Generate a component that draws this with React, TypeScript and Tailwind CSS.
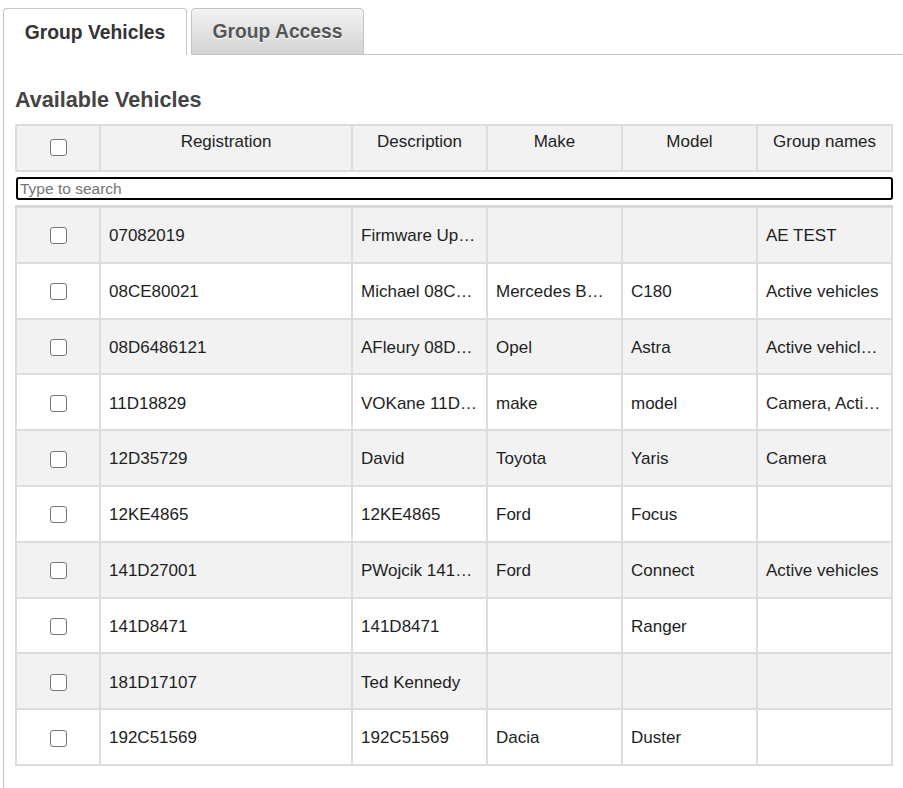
import React from "react";

type Row = { reg: string; desc: string; make: string; model: string; groups: string };

const rows: Row[] = [
  { reg: "07082019", desc: "Firmware Up…", make: "", model: "", groups: "AE TEST" },
  { reg: "08CE80021", desc: "Michael 08C…", make: "Mercedes B…", model: "C180", groups: "Active vehicles" },
  { reg: "08D6486121", desc: "AFleury 08D…", make: "Opel", model: "Astra", groups: "Active vehicl…" },
  { reg: "11D18829", desc: "VOKane 11D…", make: "make", model: "model", groups: "Camera, Acti…" },
  { reg: "12D35729", desc: "David", make: "Toyota", model: "Yaris", groups: "Camera" },
  { reg: "12KE4865", desc: "12KE4865", make: "Ford", model: "Focus", groups: "" },
  { reg: "141D27001", desc: "PWojcik 141…", make: "Ford", model: "Connect", groups: "Active vehicles" },
  { reg: "141D8471", desc: "141D8471", make: "", model: "Ranger", groups: "" },
  { reg: "181D17107", desc: "Ted Kennedy", make: "", model: "", groups: "" },
  { reg: "192C51569", desc: "192C51569", make: "Dacia", model: "Duster", groups: "" },
];

function Box() {
  return <div className="w-[17px] h-[17px] rounded-[3px] border-[1.5px] border-[#767676] bg-white" />;
}

const grid = "grid grid-cols-[86px_252px_135px_135px_135px_135px]";

export default function App() {
  return (
    <div className="w-[903px] h-[788px] bg-white overflow-hidden pt-2 font-['Liberation_Sans',Arial,sans-serif] text-[#1e1e1e]">
      <div className="flex items-end h-[47px] pl-[3px]">
        <div className="relative z-10 w-[184px] h-[47px] pt-[2px] bg-white border border-b-0 border-[#c4c4c4] rounded-t-[4px] flex items-center justify-center text-[19.3px] font-bold text-[#333]">
          Group Vehicles
        </div>
        <div className="ml-[4px] w-[173px] h-[47px] pt-[2px] bg-gradient-to-b from-[#f2f2f2] to-[#d3d3d3] border border-[#c4c4c4] rounded-t-[4px] flex items-center justify-center text-[19.3px] font-bold text-[#555] [text-shadow:0_1px_0_#fff]">
          Group Access
        </div>
        <div className="flex-1 h-[47px] border-b border-[#c4c4c4]" />
      </div>
      <div className="ml-[3px] border-l border-[#c4c4c4] h-[740px] pl-[11px]">
        <h2 className="pt-[33px] text-[21.6px] leading-[24px] font-bold text-[#444]">Available Vehicles</h2>
        <div className="mt-[12px] w-[878px]">
          <div className={`${grid} h-[48px] bg-[#f2f2f2] border-t-2 border-b-2 border-[#ddd] text-[17px]`}>
            <div className="border-l-2 border-r-2 border-[#ddd] flex justify-center pt-[13px]">
              <Box />
            </div>
            {["Registration", "Description", "Make", "Model", "Group names"].map((h) => (
              <div key={h} className="border-r-2 border-[#ddd] text-center pt-[6px] leading-[20px]">
                {h}
              </div>
            ))}
          </div>
          <div className="pt-[5px] pb-[5px] pl-[1px]">
            <input
              className="block w-[877px] h-[23px] border-2 border-black rounded-[3px] px-[2px] text-[15.5px] text-[#222] placeholder:text-[#757575] outline-none font-['Liberation_Sans',Arial,sans-serif]"
              placeholder="Type to search"
            />
          </div>
          <div className="border-t-[3px] border-[#d6d6d6]">
            {rows.map((r, i) => (
              <div
                key={r.reg}
                className={`${grid} h-[55.8px] border-b-2 border-[#ddd] text-[17px] ${i % 2 === 0 ? "bg-[#f2f2f2]" : "bg-white"}`}
              >
                <div className="border-l-2 border-r-2 border-[#ddd] flex items-center justify-center pt-[2px]">
                  <Box />
                </div>
                {[r.reg, r.desc, r.make, r.model, r.groups].map((v, j) => (
                  <div key={j} className="border-r-2 border-[#ddd] flex items-center pt-[2px] pl-[8px] pr-[4px] min-w-0 overflow-hidden">
                    <span className="whitespace-nowrap">{v}</span>
                  </div>
                ))}
              </div>
            ))}
          </div>
        </div>
      </div>
    </div>
  );
}
